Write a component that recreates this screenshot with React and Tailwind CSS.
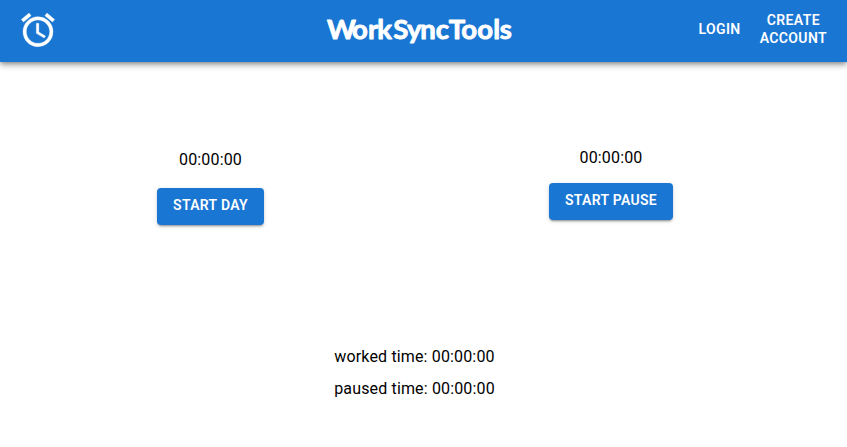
import { MdAccessAlarm } from "react-icons/md";

function ActionButton({ children }) {
  return (
    <button className="h-[36.5px] rounded-[4px] bg-[#1976d2] px-4 pb-[2px] text-sm font-semibold tracking-[0.3px] whitespace-nowrap text-white uppercase shadow-[0_3px_1px_-2px_rgba(0,0,0,0.2),0_2px_2px_0_rgba(0,0,0,0.14),0_1px_5px_0_rgba(0,0,0,0.12)]">
      {children}
    </button>
  );
}

// Wordmark with hand-set letter positions.
function Wordmark() {
  return (
    <svg viewBox="0 0 202 62" className="h-[62px] w-[202px]" role="img" aria-label="WorkSyncTools">
      <text
        x="8.9 34 50 59.3 75.2 88.9 102.2 117.8 130.8 143.2 159.2 175.3 181.8"
        y="38.5"
        className="fill-white stroke-white stroke-[0.9] font-['Lato',sans-serif] text-[27.5px] font-bold"
        strokeLinejoin="round"
      >
        WorkSyncTools
      </text>
    </svg>
  );
}

export default function App() {
  return (
    <div className="h-[447px] overflow-hidden bg-white font-['Roboto',sans-serif] text-base tracking-[0.15px] text-black">
      <header className="grid h-[62px] grid-cols-[318px_202px_1fr] items-start bg-[#1976d2] text-white shadow-[0_2px_4px_-1px_rgba(0,0,0,0.3),0_4px_5px_0_rgba(0,0,0,0.16),0_1px_10px_0_rgba(0,0,0,0.14)]">
        <MdAccessAlarm
          strokeWidth="0"
          className="mt-[10px] ml-[18px] size-10 [&>path:last-child]:stroke-white [&>path:last-child]:stroke-[0.2]"
        />
        <h1>
          <Wordmark />
        </h1>
        <nav className="flex h-[58px] items-center justify-end pr-[20px] text-sm leading-[18px] font-semibold tracking-[0.38px] uppercase">
          <span className="mr-[19px]">Login</span>
          <span className="text-center">
            Create
            <br />
            Account
          </span>
        </nav>
      </header>
      <main>
        <div className="flex h-[283px] pt-[84px]">
          <section className="flex w-[421px] flex-col items-center pt-[2px]">
            <p className="mb-4 leading-6">00:00:00</p>
            <ActionButton>Start day</ActionButton>
          </section>
          <section className="flex w-[380px] flex-col items-center">
            <p className="mb-[13px] leading-6">00:00:00</p>
            <ActionButton>Start pause</ActionButton>
          </section>
        </div>
        <section className="flex w-[829px] flex-col items-center gap-2 leading-6">
          <p>worked time: 00:00:00</p>
          <p>paused time: 00:00:00</p>
        </section>
      </main>
    </div>
  );
}
